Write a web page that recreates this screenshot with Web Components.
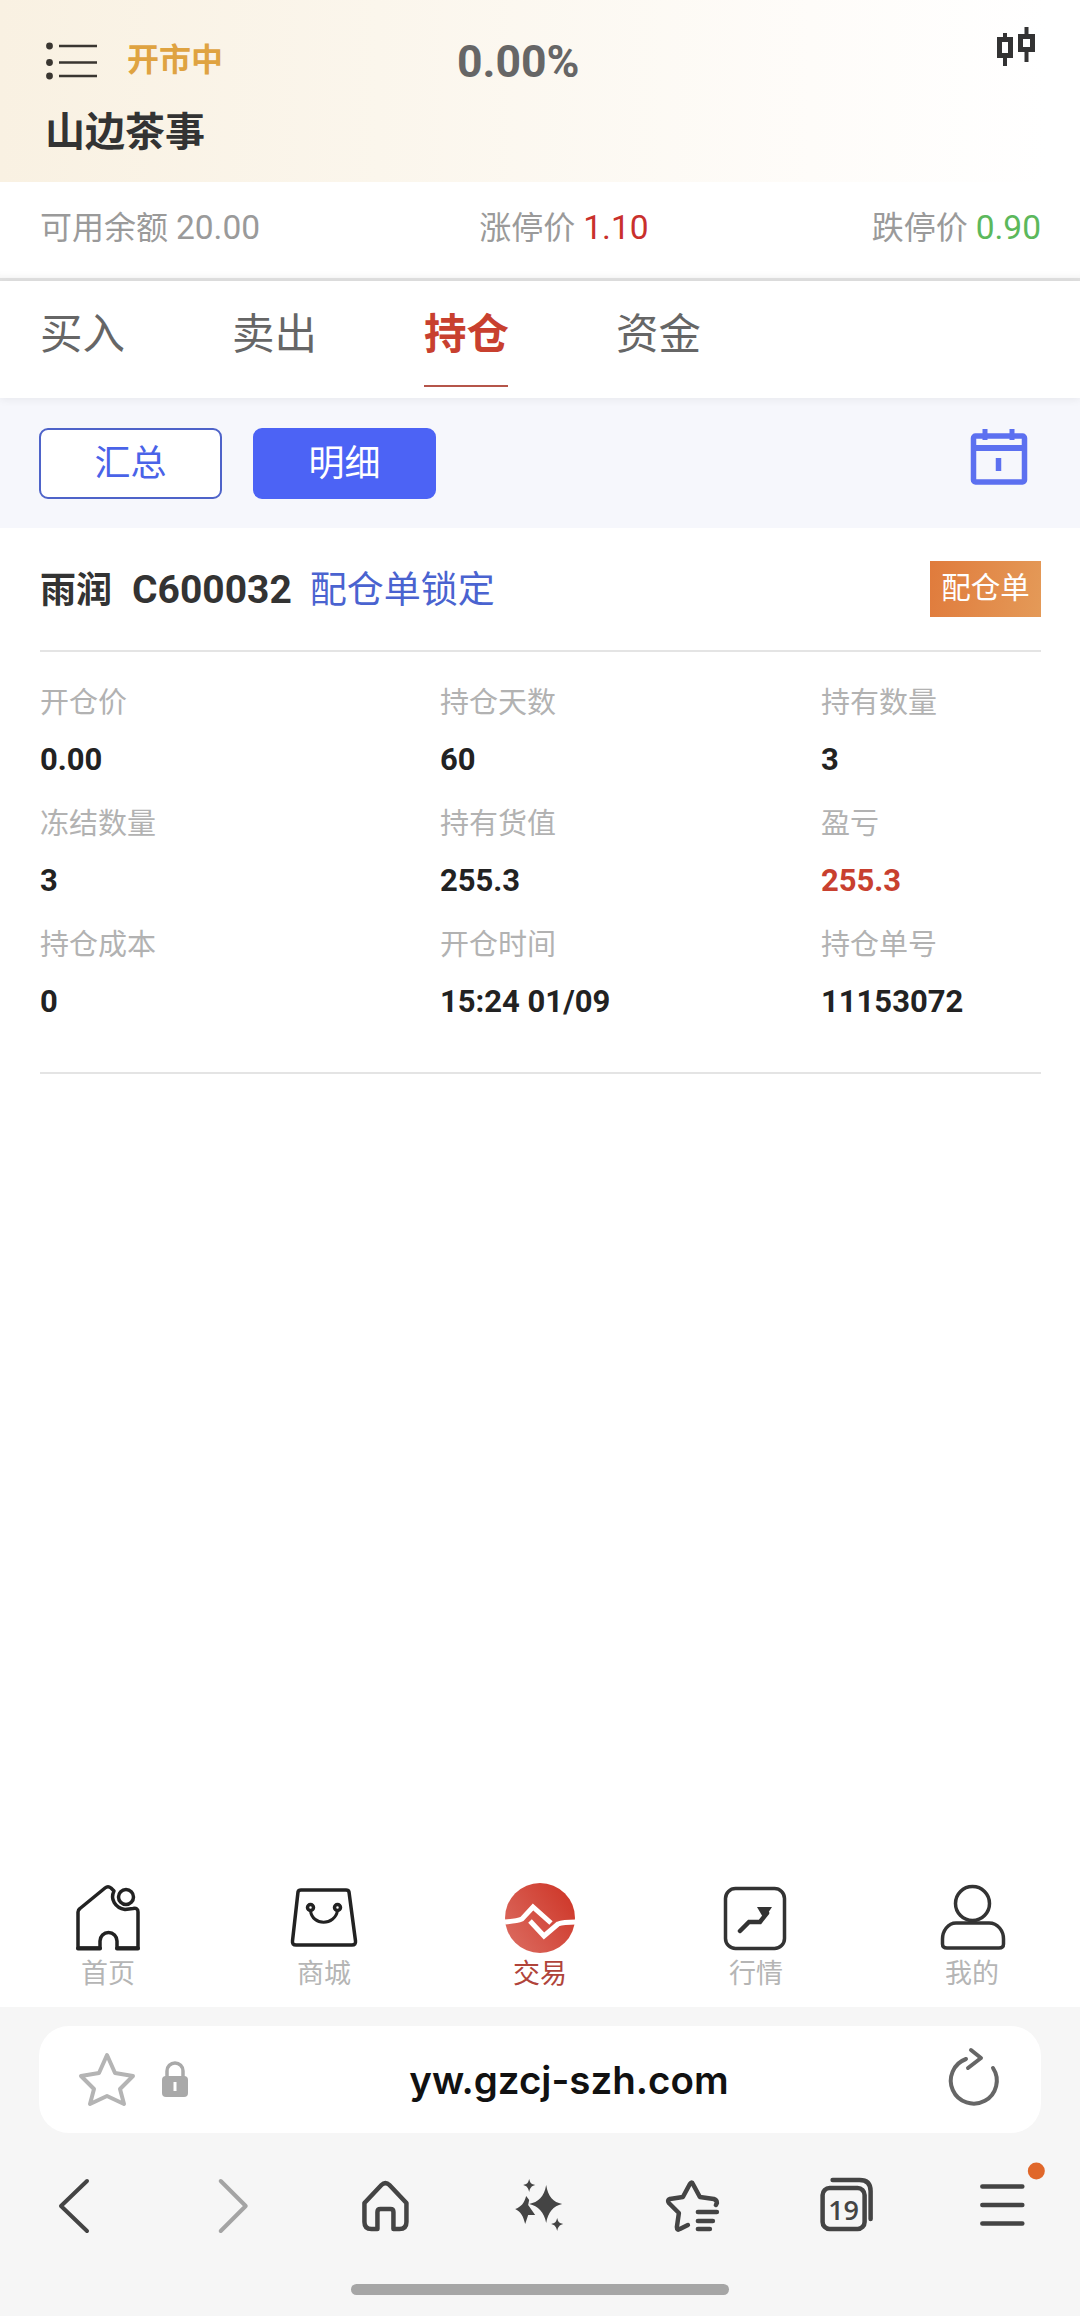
<!DOCTYPE html>
<html lang="zh-CN">
<head>
<meta charset="utf-8">
<style>
html,body{margin:0;padding:0;background:#fff}
body{width:1080px;height:2316px;overflow:hidden;font-family:Roboto,"Noto Sans CJK SC",sans-serif}
trade-app{display:flex;flex-direction:column;height:2316px}
</style>
</head>
<body>
<trade-app>
  <app-header></app-header>
  <info-row></info-row>
  <trade-tabs></trade-tabs>
  <sub-bar></sub-bar>
  <position-card></position-card>
  <tab-bar></tab-bar>
  <browser-bar></browser-bar>
</trade-app>
<script>
const FONT='Roboto,"Noto Sans CJK SC",sans-serif';
function def(name,html){
  customElements.define(name,class extends HTMLElement{
    constructor(){super();const r=this.attachShadow({mode:'open'});r.innerHTML=typeof html==='function'?html(this):html;}
  });
}
def('trade-app',`<style>:host{display:flex;flex-direction:column;height:2316px}</style><slot></slot>`);

def('app-header',`<style>
:host{display:block;position:relative;height:182px;box-sizing:border-box;padding:27px 44px 0 45px;background:linear-gradient(90deg,#f9f1e2 0%,#fbf6ec 35%,#fefcf9 75%,#fff 97%);font-family:${FONT}}
.r{display:grid;grid-template-columns:82px 330px 1fr auto;align-items:center;height:66px}
.st{font-size:32px;font-weight:700;color:#dfa341;line-height:66px}
.pc{position:absolute;left:457px;top:29px;font-size:44.500px;font-weight:700;color:#666;line-height:66px}
.n{font-size:40px;font-weight:700;color:#333;line-height:56px;margin-top:12px}
svg{display:block}
.c{align-self:start}
</style>
<div class="r">
<svg width="52" height="40" viewBox="46 39 52 40"><g fill="#3a3631"><circle cx="50.500" cy="45" r="3.400"/><circle cx="50.500" cy="61.500" r="3.400"/><circle cx="50.500" cy="75" r="3.400"/></g><path d="M60 45H98M60 61.500H98M60 75H98" fill="none" stroke="#3a3631" stroke-width="2.600"/></svg>
<span class="st">开市中</span><span></span>
<svg class="c" width="40" height="40" viewBox="997 27 40 40"><g fill="none" stroke="#333" stroke-width="5"><rect x="1000.500" y="39.500" width="11" height="16"/><rect x="1021.500" y="36.500" width="12" height="13"/><path d="M1006 33V39M1006 56V66M1027.500 27V36M1027.500 50V62" stroke-width="4"/></g></svg>
</div>
<div class="n">山边茶事</div>
<span class="pc">0.00%</span>`);

def('info-row',`<style>
:host{display:flex;justify-content:space-between;align-items:center;height:99px;box-sizing:border-box;padding:0 39px 10px 40px;font-family:${FONT};font-size:32px;color:#9a9a9a;background:#fff;border-bottom:3px solid #dfdfdf;box-shadow:inset 0 -8px 8px -8px #eee}
i{font-style:normal;font-size:33.500px}
.r{color:#c9302c}.g{color:#5cb85c}
</style>
<span>可用余额 <i>20.00</i></span><span style="margin-left:-4px">涨停价 <i class="r">1.10</i></span><span>跌停价 <i class="g">0.90</i></span>`);

def('trade-tabs',`<style>
:host{display:flex;gap:108px;height:117px;box-sizing:border-box;padding:0 40px;font-family:${FONT};background:#fff;position:relative;box-shadow:0 2px 8px rgba(0,0,0,.06)}
span{width:84px;font-size:42.500px;line-height:108px;color:#666;white-space:nowrap;height:106px;box-sizing:border-box}
.a{color:#c8402f;font-weight:700;border-bottom:2px solid #b5554a}
</style>
<span>买入</span><span>卖出</span><span class="a">持仓</span><span>资金</span>`);

def('sub-bar',`<style>
:host{display:flex;align-items:flex-start;height:130px;box-sizing:border-box;padding:30px 51px 0 39px;background:#f6f7fc;font-family:${FONT}}
b{font-weight:400;width:183px;height:71px;box-sizing:border-box;border-radius:9px;font-size:36px;line-height:69px;text-align:center;border:2px solid #4e63c9;color:#4a63e8;background:#fff}
.a{background:#4c63f5;border-color:#4c63f5;color:#fff;margin-left:31px}
.s{flex:1}
svg{display:block;margin-top:-1px}
</style>
<b>汇总</b><b class="a">明细</b><span class="s"></span>
<svg width="60" height="60" viewBox="969 428 60 60"><g fill="none" stroke="#5c70f0" stroke-width="5.500" stroke-linejoin="round"><rect x="973.500" y="437" width="51" height="46" rx="2"/><path d="M973 449H1025" stroke-width="6"/><path d="M985 430V441M1012 430V441" stroke-width="5"/><path d="M998.500 459V472"/></g></svg>`);

def('data-field',(el)=>`<style>
:host{display:block;font-family:${FONT};margin-bottom:7px}
.l{font-size:29px;line-height:60px;color:#b2b2b2;white-space:nowrap}
.v{font-size:31px;font-weight:700;line-height:54px;color:#222;white-space:nowrap}
:host([red]) .v{color:#c8402f}
</style><div class="l">${el.getAttribute('l')}</div><div class="v">${el.getAttribute('v')}</div>`);

def('position-card',`<style>
:host{display:flex;flex-direction:column;flex:1;box-sizing:border-box;padding:0 39px 0 40px;background:#fff;font-family:${FONT}}
.t{display:flex;align-items:center;height:122px;border-bottom:2px solid #e4e4e4}
.h{display:flex;align-items:baseline;margin-top:-4px}
.n{font-size:36px;font-weight:700;color:#333}
.c{font-size:39px;font-weight:700;color:#333;margin-left:20px}
.k{font-size:37px;color:#4a63d0;margin-left:18px}
.b{margin-left:auto;width:111px;height:56px;font-size:29.500px;line-height:54px;text-align:center;color:#fff;background:linear-gradient(100deg,#e07b3c,#e49a58)}
.g{display:grid;grid-template-columns:400px 381px 1fr;padding:21px 0 36px;border-bottom:2px solid #e4e4e4}
</style>
<div class="t"><span class="h"><span class="n">雨润</span><span class="c">C600032</span><span class="k">配仓单锁定</span></span><span class="b">配仓单</span></div>
<div class="g">
<data-field l="开仓价" v="0.00"></data-field><data-field l="持仓天数" v="60"></data-field><data-field l="持有数量" v="3"></data-field>
<data-field l="冻结数量" v="3"></data-field><data-field l="持有货值" v="255.3"></data-field><data-field l="盈亏" v="255.3" red></data-field>
<data-field l="持仓成本" v="0"></data-field><data-field l="开仓时间" v="15:24 01/09"></data-field><data-field l="持仓单号" v="11153072"></data-field>
</div>`);

def('tab-item',`<style>
:host{display:flex;flex-direction:column;align-items:center;width:216px;font-family:${FONT};font-size:27px;color:#b5b5b5;line-height:38px}
:host([active]){color:#b0443a}
::slotted(svg){display:block;margin-bottom:-1px}
</style><slot name="i"></slot><span><slot></slot></span>`);

def('tab-bar',`<style>
:host{display:flex;height:137px;box-sizing:border-box;padding-top:10px;background:#fff}
</style>
<tab-item><svg slot="i" width="216" height="76" viewBox="0 1880 216 76" fill="none" stroke="#222" stroke-width="3.500" stroke-linejoin="round" stroke-linecap="round"><path d="M114 1891L111 1888Q108 1885.500 105 1888L80 1908.500Q78 1910 78 1912V1948H100V1941A8.500 8.500 0 0 1 117 1941V1948H138V1912Q138 1907.500 133 1908.500L125 1909.500C115 1908 110 1899 114 1891Z"/><circle cx="126" cy="1897" r="7.500"/><path d="M78 1948.500H100M117 1948.500H138" stroke-width="4"/></svg>首页</tab-item>
<tab-item><svg slot="i" width="216" height="76" viewBox="216 1880 216 76" fill="none" stroke="#222" stroke-width="3.500" stroke-linejoin="round" stroke-linecap="round"><path d="M298 1892Q298.500 1890 301 1890H346Q348.500 1890 349 1892L355.500 1941Q356 1945 352 1945H296Q292 1945 292.500 1941Z"/><circle cx="310.500" cy="1907.500" r="3"/><circle cx="337.500" cy="1907.500" r="3"/><path d="M310.500 1910.500C312 1926 335 1926 337.500 1910.500" stroke-width="3"/></svg>商城</tab-item>
<tab-item active><svg slot="i" width="216" height="76" viewBox="432 1880 216 76"><defs><linearGradient id="g" x1="0" y1="1" x2="1" y2="0.3"><stop offset="0" stop-color="#dc6e63"/><stop offset="1" stop-color="#cf3a2c"/></linearGradient></defs><circle cx="540" cy="1918" r="35" fill="url(#g)"/><g fill="none" stroke="#fff" stroke-width="5"><path d="M505 1922Q517 1921 522 1919L533 1907L551 1923"/><path d="M530 1921L544 1936L558 1924Q563 1922 576 1922"/></g></svg>交易</tab-item>
<tab-item><svg slot="i" width="216" height="76" viewBox="648 1880 216 76" fill="none" stroke="#333" stroke-width="3.500"><rect x="725.500" y="1888.500" width="59" height="60" rx="10"/><path d="M740 1931L749 1922H760L767 1913" stroke-width="4.500" stroke-linecap="round"/><path d="M757 1907H772L764 1919Z" fill="#333" stroke="none"/></svg>行情</tab-item>
<tab-item><svg slot="i" width="216" height="76" viewBox="864 1880 216 76" fill="none" stroke="#333" stroke-width="3.500"><circle cx="972.500" cy="1903.500" r="17"/><path d="M956 1923H989C998 1923 1003.500 1931 1003.500 1939V1944Q1003.500 1948 999 1948H947Q942.500 1948 942.500 1944V1939C942.500 1931 948 1923 956 1923Z"/></svg>我的</tab-item>`);

def('browser-bar',`<style>
:host{display:block;height:309px;box-sizing:border-box;background:#f6f6f6;padding-top:19px;font-family:${FONT}}
.p{display:grid;grid-template-columns:1fr auto 1fr;align-items:center;height:107px;margin:0 39px;background:#fff;border-radius:30px}
.u{font-family:Inter,Roboto,sans-serif;font-size:38.500px;font-weight:600;color:#111;white-space:nowrap;margin-left:58px}
svg{display:block}
.tb{display:grid;grid-template-columns:repeat(7,1fr);margin-top:36px}
.tb svg{width:100%;height:90px;overflow:visible}
.h{width:378px;height:11px;border-radius:6px;background:#a6a6a6;margin:25px auto 0}
text{font-family:"Open Sans",Roboto,sans-serif}
</style>
<div class="p">
<svg width="200" height="107" viewBox="39 2026 200 107" fill="none"><path d="M107 2055L115 2073L133 2076L120 2089L124 2104L107 2096L90 2104L94 2089L81 2076L99 2073Z" stroke="#b4b4b4" stroke-width="4" stroke-linejoin="round"/><rect x="162" y="2076" width="26" height="21" rx="4" fill="#a9a9a9"/><path d="M167 2077V2071A8 8 0 0 1 183 2071V2077" stroke="#a9a9a9" stroke-width="3.500"/><rect x="173.500" y="2082" width="3" height="9" fill="#fff"/></svg>
<span class="u">yw.gzcj-szh.com</span>
<svg width="200" height="107" viewBox="841 2026 200 107" fill="none" style="justify-self:end" stroke="#666" stroke-width="4" stroke-linecap="round" stroke-linejoin="round"><path d="M966 2059A23 23 0 1 0 993 2068"/><path d="M971 2050L981 2058L968 2068"/></svg>
</div>
<div class="tb">
<svg viewBox="0 2170 154.280 90" fill="none"><path d="M87 2182L61 2207L87 2232" stroke="#444" stroke-width="4" stroke-linecap="round" stroke-linejoin="round"/></svg>
<svg viewBox="154.280 2170 154.280 90" fill="none"><path d="M221 2182L246 2207L221 2232" stroke="#a4a4a4" stroke-width="4" stroke-linecap="round" stroke-linejoin="round"/></svg>
<svg viewBox="308.560 2170 154.280 90" fill="none" stroke="#444" stroke-width="4.500" stroke-linejoin="round"><path d="M364 2204L381 2186Q385 2182 389 2186L406 2204V2223Q406 2230 399 2230H393V2213Q393 2210 390 2210H380Q377 2210 377 2213V2230H371Q364 2230 364 2223Z"/></svg>
<svg viewBox="462.840 2170 154.280 90" fill="#444"><path d="M546 2186C548 2198 553 2203 562 2205C553 2207 548 2213 546 2224C544 2213 538 2207 529 2205C538 2203 544 2198 546 2186Z"/><path d="M529 2180C530 2184 531 2185 535 2186C531 2187 530 2189 529 2193C528 2189 527 2187 523 2186C527 2185 528 2184 529 2180Z"/><path d="M557 2219C558 2223 559 2224 563 2225C559 2226 558 2228 557 2232C556 2228 555 2226 551 2225C555 2224 556 2223 557 2219Z"/><path d="M526 2197L529 2201L528 2206L535 2216L528 2216L525 2225C523 2217 521 2213 515 2210C521 2208 524 2204 526 2197Z"/></svg>
<svg viewBox="617.120 2170 154.280 90" fill="none" stroke="#444" stroke-width="4.500" stroke-linecap="round" stroke-linejoin="round"><path d="M716 2206L717 2204Q717 2201 714 2200L700 2198L693 2185Q692 2182 690 2185L683 2198L670 2200Q667 2201 669 2204L679 2214L677 2228Q677 2232 680 2230L688 2226"/><path d="M698 2213H717M698 2222H713M698 2230H710"/></svg>
<svg viewBox="771.400 2170 154.280 90" fill="none" stroke="#444" stroke-width="4.500"><rect x="823" y="2189" width="42" height="41" rx="7"/><path d="M833 2181H860Q871 2181 871 2192V2220" stroke-linecap="round"/><text x="844" y="2221" text-anchor="middle" font-size="27" font-weight="600" fill="#444" stroke="none">19</text></svg>
<svg viewBox="925.680 2170 154.280 90" fill="none" stroke="#444" stroke-width="4.500" stroke-linecap="round"><path d="M982 2187.500H1022M982 2206H1022M982 2224.500H1022"/><circle cx="1036" cy="2172" r="8.500" fill="#e0672a" stroke="none"/></svg>
</div>
<div class="h"></div>`);
</script>
</body>
</html>
